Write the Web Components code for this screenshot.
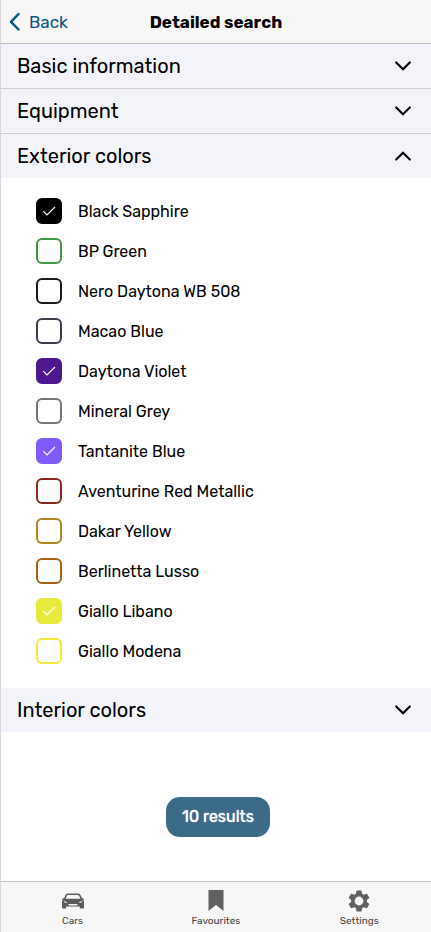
<!DOCTYPE html>
<html lang="en">
<head>
<meta charset="utf-8">
<meta name="viewport" content="width=device-width, initial-scale=1">
<title>Detailed search</title>
<style>
  body { margin: 0; background: #fff; color: #000; font-family: Rubik, Roboto, "Liberation Sans", sans-serif; }
</style>
</head>
<body>
<search-page>
  <nav-header slot="header" heading="Detailed search"></nav-header>
  <filter-section heading="Basic information" divided></filter-section>
  <filter-section heading="Equipment" divided></filter-section>
  <filter-section heading="Exterior colors" open>
    <color-option color="#000000" checked>Black Sapphire</color-option>
    <color-option color="#3f9a45">BP Green</color-option>
    <color-option color="#1d1a1d">Nero Daytona WB 508</color-option>
    <color-option color="#403b4c">Macao Blue</color-option>
    <color-option color="#4f178d" checked>Daytona Violet</color-option>
    <color-option color="#757575">Mineral Grey</color-option>
    <color-option color="#8059ff" checked>Tantanite Blue</color-option>
    <color-option color="#8b271e">Aventurine Red Metallic</color-option>
    <color-option color="#b08420">Dakar Yellow</color-option>
    <color-option color="#ad6216">Berlinetta Lusso</color-option>
    <color-option color="#e7e93d" checked>Giallo Libano</color-option>
    <color-option color="#f4e83a">Giallo Modena</color-option>
  </filter-section>
  <filter-section heading="Interior colors"></filter-section>
  <results-button slot="action">10 results</results-button>
  <tab-bar slot="footer">
    <tab-item href="#cars">
      <svg slot="icon" width="24" height="24" viewBox="0 0 24 24" fill="#5b5b5b" aria-hidden="true"><path fill-rule="evenodd" d="M7 4.500h10c1.500 0 2.100.7 2.700 1.900L21 9.300h1.700v1.300h-.9c.9.8 1.200 1.600 1.200 2.700v5.200c0 .7-.4 1-1 1h-2.200c-.6 0-1-.3-1-1v-.9H5.200v.9c0 .7-.4 1-1 1H2c-.6 0-1-.3-1-1v-5.200c0-1.100.3-1.900 1.200-2.700h-.9V9.300H3l1.300-2.900C4.900 5.200 5.500 4.500 7 4.500zM7.200 6c-.7 0-1.100.3-1.400 1L4.600 9.800h14.800L18.200 7c-.3-.7-.7-1-1.400-1zM2.800 12.100c0 1.300 1.200 1.900 3.500 1.900-.7-1.100-1.700-1.700-3.500-1.900zM21.200 12.100c-1.800.2-2.800.8-3.500 1.900 2.300 0 3.500-.6 3.500-1.900zM7 15l1.200 1.600h7.600L17 15z"/></svg>
      Cars
    </tab-item>
    <tab-item href="#favourites">
      <svg slot="icon" width="24" height="24" viewBox="0 0 24 24" fill="#616161" aria-hidden="true"><path d="M4.500 1h15v21L12 16l-7.500 6z"/></svg>
      Favourites
    </tab-item>
    <tab-item href="#settings" active>
      <svg slot="icon" width="24" height="24" viewBox="0 0 24 24" fill="#616161" aria-hidden="true"><path transform="translate(-1.200 -1.200) scale(1.100)" d="M19.140 12.940c.04-.3.060-.61.060-.94 0-.32-.02-.64-.07-.94l2.030-1.580c.18-.14.230-.41.120-.61l-1.920-3.320c-.12-.22-.37-.29-.59-.22l-2.390.96c-.5-.38-1.030-.7-1.620-.94l-.36-2.540c-.04-.24-.24-.41-.48-.41h-3.840c-.24 0-.43.17-.47.410l-.36 2.540c-.59.240-1.130.570-1.620.940l-2.390-.96c-.22-.08-.47 0-.59.220L2.740 8.870c-.12.210-.08.470.120.610l2.030 1.580c-.05.300-.09.630-.09.940s.020.640.070.940l-2.030 1.580c-.18.140-.23.410-.12.610l1.920 3.320c.12.220.370.290.590.220l2.390-.96c.5.380 1.030.700 1.620.940l.36 2.540c.05.240.240.410.480.410h3.840c.24 0 .44-.17.470-.41l.36-2.540c.59-.24 1.130-.56 1.620-.94l2.390.96c.22.080.470 0 .59-.22l1.920-3.320c.12-.22.070-.47-.12-.61zM12 16a4 4 0 1 1 0-8 4 4 0 0 1 0 8z"/></svg>
      Settings
    </tab-item>
  </tab-bar>
</search-page>

<script>
  class BaseElement extends HTMLElement {
    constructor() {
      super();
      this.attachShadow({ mode: "open" });
    }
    connectedCallback() {
      if (!this.shadowRoot.firstChild) {
        this.shadowRoot.innerHTML = `<style>*{box-sizing:border-box}:host{box-sizing:border-box}</style>` + this.render();
        this.ready();
      }
    }
    ready() {}
  }

  customElements.define("search-page", class extends BaseElement {
    render() {
      return `
        <style>
          :host { display: flex; flex-direction: column; min-height: 100vh; border-left: 1px solid #d9d8e0; }
          main { flex: 1; display: flex; flex-direction: column; }
          .action { margin-top: auto; padding: 44px 16px 44px 20px; display: flex; justify-content: center; }
        </style>
        <slot name="header"></slot>
        <main><slot></slot><div class="action"><slot name="action"></slot></div></main>
        <slot name="footer"></slot>`;
    }
  });

  customElements.define("nav-header", class extends BaseElement {
    render() {
      return `
        <style>
          :host { display: block; background: #f7f7f7; border-bottom: 1px solid #b8bcb8; }
          header { display: grid; grid-template-columns: 1fr auto 1fr; align-items: center; height: 43px; padding: 0 8px; }
          button { justify-self: start; display: flex; align-items: center; gap: 8px; padding: 0; border: 0; background: none; color: #0a5486; font-family: inherit; font-size: 17px; line-height: 24px; cursor: pointer; }
          h1 { margin: 0; font-size: 17px; line-height: 24px; font-weight: 700; }
        </style>
        <header>
          <button type="button">
            <svg width="12" height="20" viewBox="0 0 12 20" fill="none" stroke="currentColor" stroke-width="2.500" stroke-linecap="round" stroke-linejoin="round" aria-hidden="true"><path d="M9.500 2L2 9.800l7.500 7.700"/></svg>
            <span>Back</span>
          </button>
          <h1>${this.getAttribute("heading")}</h1>
        </header>`;
    }
  });

  customElements.define("filter-section", class extends BaseElement {
    render() {
      const open = this.hasAttribute("open");
      return `
        <style>
          :host { display: block; }
          :host([divided]) { border-bottom: 1px solid #cdced3; }
          h2 { margin: 0; }
          button { display: flex; align-items: center; justify-content: space-between; width: 100%; height: 44px; padding: 0 16px; border: 0; background: #f3f4f9; color: #000; font-family: inherit; font-size: 20px; line-height: 24px; text-align: left; cursor: pointer; }
          :host([open]) svg { transform: rotate(180deg); }
          .content { display: none; padding: 13px 35px 17px; }
          :host([open]) .content { display: block; }
        </style>
        <h2><button type="button" aria-expanded="${open}" aria-controls="content">
          <span>${this.getAttribute("heading")}</span>
          <svg width="24" height="24" viewBox="0 0 24 24" fill="none" stroke="currentColor" stroke-width="2.200" stroke-linecap="round" aria-hidden="true"><path d="M5.200 8.500l6.800 6.800 6.800-6.800"/></svg>
        </button></h2>
        <div class="content" id="content"><slot></slot></div>`;
    }
    ready() {
      const button = this.shadowRoot.querySelector("button");
      button.addEventListener("click", () => {
        button.setAttribute("aria-expanded", String(this.toggleAttribute("open")));
      });
    }
  });

  customElements.define("color-option", class extends BaseElement {
    render() {
      return `
        <style>
          :host { display: block; --color: ${this.getAttribute("color")}; }
          label { display: flex; align-items: center; gap: 16px; height: 40px; font-size: 16px; line-height: 24px; cursor: pointer; }
          .box { display: grid; width: 26px; height: 26px; }
          .box > * { grid-area: 1 / 1; }
          .name { padding-top: 2px; }
          input { appearance: none; width: 26px; height: 26px; margin: 0; border: 2px solid var(--color); border-radius: 6px; background: #fff; }
          input:checked { background: var(--color); }
          svg { display: none; pointer-events: none; }
          input:checked + svg { display: block; }
        </style>
        <label>
          <span class="box">
            <input type="checkbox" ${this.hasAttribute("checked") ? "checked" : ""}>
            <svg width="26" height="26" viewBox="0 0 26 26" fill="none" stroke="#fff" stroke-width="1.100" aria-hidden="true"><path d="M7.300 13.200l3.700 3.800L19 9"/></svg>
          </span>
          <span class="name"><slot></slot></span>
        </label>`;
    }
  });

  customElements.define("results-button", class extends BaseElement {
    render() {
      return `
        <style>
          :host { display: block; }
          button { display: block; height: 40px; padding: 0 16px; border: 0; border-radius: 14px; background: #3c6b8a; color: #fff; font-family: inherit; font-size: 16px; line-height: 24px; text-shadow: 0 0 1px #fff; cursor: pointer; }
        </style>
        <button type="button"><slot></slot></button>`;
    }
  });

  customElements.define("tab-bar", class extends BaseElement {
    render() {
      return `
        <style>
          :host { display: block; background: #f7f7f7; border-top: 1px solid #c3c3c5; }
          nav { display: grid; grid-template-columns: repeat(3, 1fr); height: 50px; }
        </style>
        <nav><slot></slot></nav>`;
    }
  });

  customElements.define("tab-item", class extends BaseElement {
    render() {
      return `
        <style>
          :host { display: block; }
          a { display: flex; flex-direction: column; align-items: center; gap: 2px; padding-top: 7px; color: #444; text-decoration: none; font-size: 10px; line-height: 12px; }
        </style>
        <a href="${this.getAttribute("href")}" ${this.hasAttribute("active") ? 'aria-current="page"' : ""}>
          <slot name="icon"></slot>
          <span><slot></slot></span>
        </a>`;
    }
  });
</script>
</body>
</html>
